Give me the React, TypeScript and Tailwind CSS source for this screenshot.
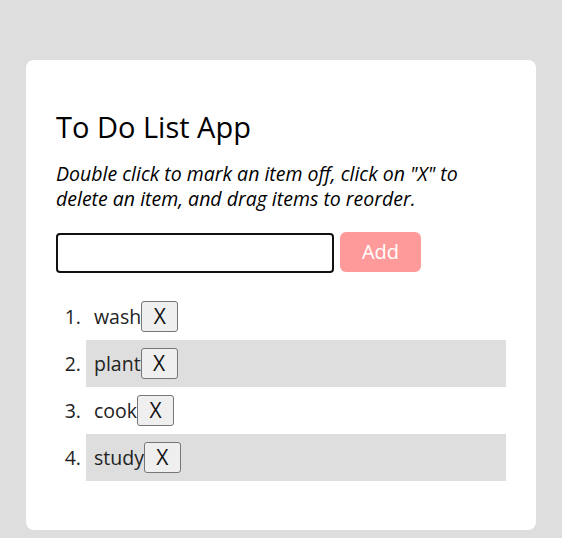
import React from "react";

const items = ["wash", "plant", "cook", "study"];

export default function App() {
  return (
    <div className="min-h-[538px] bg-[#dedede] px-[26px] pt-[60px] pb-[8px] font-['Open_Sans',sans-serif]">
      <div className="bg-white rounded-[8px] px-[30px] pt-[47px] pb-[49px]">
        <h1 className="text-[29px] leading-[40px] text-black m-0">To Do List App</h1>
        <p className="mt-[14px] text-[19.5px] leading-[25px] italic text-black">
          Double click to mark an item off, click on "X" to delete an item, and drag items to reorder.
        </p>
        <div className="mt-[22px] flex gap-[6px]">
          <input
            type="text"
            className="w-[278px] h-[40px] border-2 border-[#111] rounded-[4px] outline-none px-2"
          />
          <button className="w-[81px] h-[40px] -mt-[1px] rounded-[6px] bg-[#ff9a9a] text-white text-[20px]">
            Add
          </button>
        </div>
        <ol className="mt-[20px] list-decimal pl-[30px] text-[19.5px] text-[#222]">
          {items.map((it, i) => (
            <li
              key={it}
              className={`pl-[8px] h-[47px] ${i % 2 === 1 ? "bg-[#dedede]" : ""}`}
            >
              <div className="flex items-center h-full">
                <span>{it}</span>
                <button className="w-[37px] h-[31px] border border-[#767676] rounded-[3px] bg-[#efefef] text-[21px] leading-none text-[#111] flex items-center justify-center">
                  X
                </button>
              </div>
            </li>
          ))}
        </ol>
      </div>
    </div>
  );
}
